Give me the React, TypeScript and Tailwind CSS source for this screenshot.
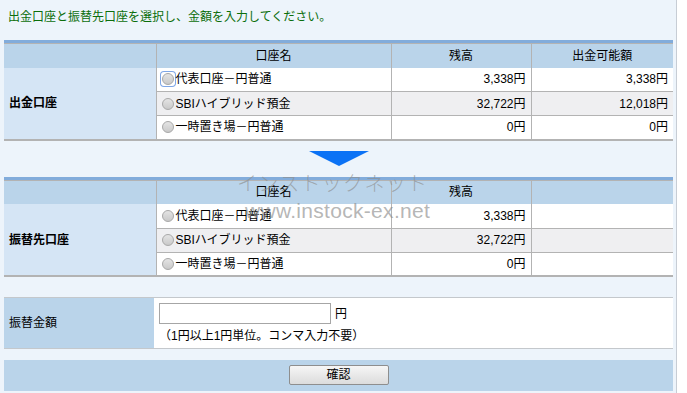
import React from 'react';

type Row = { name: string; balance: string; available?: string };

const fromRows: Row[] = [
  { name: '代表口座－円普通', balance: '3,338円', available: '3,338円' },
  { name: 'SBIハイブリッド預金', balance: '32,722円', available: '12,018円' },
  { name: '一時置き場－円普通', balance: '0円', available: '0円' },
];

const toRows: Row[] = [
  { name: '代表口座－円普通', balance: '3,338円' },
  { name: 'SBIハイブリッド預金', balance: '32,722円' },
  { name: '一時置き場－円普通', balance: '0円' },
];

function Radio({ focused }: { focused?: boolean }) {
  return (
    <span
      className={`inline-flex items-center justify-center w-[14px] h-[14px] mr-[1px] shrink-0 rounded-[3px] ${focused ? 'ring-1 ring-[#7ea6e6]' : ''}`}
    >
      <span className="w-[12px] h-[12px] rounded-full border border-[#a9a9a9] bg-gradient-to-b from-[#e4e4e4] to-[#c9c9c9]" />
    </span>
  );
}

function AccountTable({ label, rows, showAvailable }: { label: string; rows: Row[]; showAvailable: boolean }) {
  return (
    <div className="w-[669px]">
      <div className="h-[3px] bg-[#82acdb]" />
      <table className="w-[669px] table-fixed border-collapse border-t border-b-2 border-[#b3b3b3]">
        <colgroup>
          <col className="w-[152px]" />
          <col className="w-[235px]" />
          <col className="w-[140px]" />
          <col className="w-[142px]" />
        </colgroup>
        <thead>
          <tr className="h-[24px] bg-[#bad4ea]">
            <th className="font-normal" />
            <th className="font-normal text-center border-l border-[#b3b3b3]">口座名</th>
            <th className="font-normal text-center border-l border-[#b3b3b3]">残高</th>
            <th className="font-normal text-center border-l border-[#b3b3b3]">{showAvailable ? '出金可能額' : ''}</th>
          </tr>
        </thead>
        <tbody>
          {rows.map((r, i) => (
            <tr key={i} className={`h-[24px] ${i === 1 ? 'bg-[#efeff1]' : 'bg-white'} ${i > 0 ? 'border-t border-[#b3b3b3]' : ''}`}>
              {i === 0 && (
                <td rowSpan={3} className="bg-[#d5e5f5] pl-[5px] font-bold">
                  {label}
                </td>
              )}
              <td className="border-l border-[#b3b3b3] pl-[4px]">
                <span className="flex items-center">
                  <Radio focused={showAvailable && i === 0} />
                  {r.name}
                </span>
              </td>
              <td className="border-l border-[#b3b3b3] text-right pr-[5px]">{r.balance}</td>
              <td className="border-l border-[#b3b3b3] text-right pr-[5px]">{r.available ?? ''}</td>
            </tr>
          ))}
        </tbody>
      </table>
    </div>
  );
}

export default function App() {
  return (
    <div className="flex w-[687px] h-[393px] overflow-hidden bg-white text-[12px] leading-[16px] text-black font-['Liberation_Sans','Noto_Sans_CJK_JP',sans-serif]">
      <div className="relative w-[677px] h-full bg-[#edf4fb] border-r border-[#c7cdd5] pl-[4px]">
        <p className="mt-[9px] pl-[4px] text-[#0b6e0b]">出金口座と振替先口座を選択し、金額を入力してください。</p>

        <div className="mt-[15px]">
          <AccountTable label="出金口座" rows={fromRows} showAvailable />
        </div>

        <div className="flex justify-center w-[669px] mt-[10px] mb-[11px]">
          <svg width="60" height="15" viewBox="0 0 60 15">
            <polygon points="0,0 60,0 30,15" fill="#0b72f5" />
          </svg>
        </div>

        <AccountTable label="振替先口座" rows={toRows} showAvailable={false} />

        <div className="mt-[20px] w-[669px] flex h-[52px] border-t border-b border-[#c4c8cc]">
          <div className="w-[150px] bg-[#bad4ea] flex items-center pl-[5px]">振替金額</div>
          <div className="flex-1 bg-white pl-[5px] pt-[5px]">
            <div className="flex items-center gap-[4px]">
              <div className="w-[172px] h-[21px] border border-[#a6a6a6] bg-white" />
              <span>円</span>
            </div>
            <p className="mt-[4px]">（1円以上1円単位。コンマ入力不要）</p>
          </div>
        </div>

        <div className="mt-[11px] w-[669px] h-[31px] bg-[#bad4ea] flex justify-center pt-[5px]">
          <button className="w-[100px] h-[20px] rounded-[2px] border border-[#8e8e8e] bg-gradient-to-b from-[#f6f6f6] to-[#dcdcdc] text-[12px] leading-[18px]">
            確認
          </button>
        </div>

        <div className="absolute left-[237px] top-[170px] pointer-events-none text-[20px] leading-[26px] text-[#8c8c8c]/65 font-light font-['Noto_Sans_CJK_JP',sans-serif]">
          <p className="tracking-[1.3px]">インストックネット</p>
          <p className="ml-[8px] mt-[2px] text-[21px] tracking-[0.3px] font-['Liberation_Sans',sans-serif]">www.instock-ex.net</p>
        </div>
      </div>
    </div>
  );
}
